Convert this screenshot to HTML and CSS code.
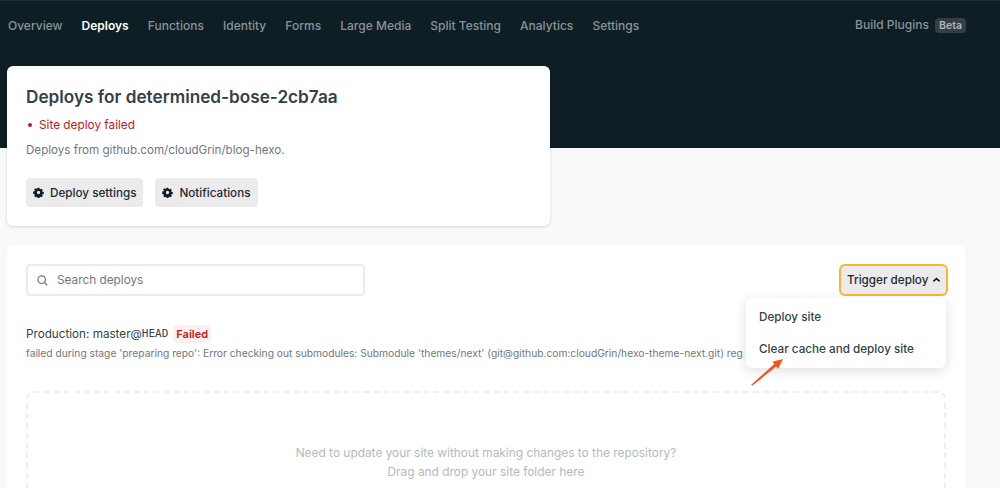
FILE: index.html
```html
<!DOCTYPE html>
<html lang="en">
<head>
  <meta charset="UTF-8">
  <title>Deploys | determined-bose-2cb7aa</title>
  <link rel="stylesheet" href="styles.css">
</head>
<body>
  <!-- Header Section -->
  <header class="site-header">
    <nav class="tabs">
      <a href="#">Overview</a>
      <a href="#" class="active">Deploys</a>
      <a href="#">Functions</a>
      <a href="#">Identity</a>
      <a href="#">Forms</a>
      <a href="#">Large Media</a>
      <a href="#">Split Testing</a>
      <a href="#">Analytics</a>
      <a href="#">Settings</a>
      <a href="#" class="plugins">Build Plugins <span class="beta">Beta</span></a>
    </nav>
  </header>

  <!-- Site Card -->
  <section class="site-card">
    <h1>Deploys for determined-bose-2cb7aa</h1>
    <p class="status"><span class="dot"></span>Site deploy failed</p>
    <p class="source">Deploys from github.com/cloudGrin/blog-hexo.</p>
    <div class="card-actions">
      <button class="btn">
        <svg class="gear" viewBox="0 0 16 16"><path fill-rule="evenodd" d="M6.700 1h2.600l.4 1.900 1.100.5 1.700-1 1.800 1.800-1 1.700.5 1.100 1.900.4v2.600l-1.900.4-.5 1.100 1 1.700-1.800 1.800-1.700-1-1.100.5-.4 1.900H6.700l-.4-1.900-1.100-.5-1.700 1-1.800-1.800 1-1.700-.5-1.100-1.900-.4V6.700l1.900-.4.5-1.100-1-1.700 1.800-1.800 1.700 1 1.100-.5zM8 5.600a2.400 2.400 0 1 0 0 4.800 2.400 2.400 0 0 0 0-4.800z"/></svg>
        Deploy settings
      </button>
      <button class="btn">
        <svg class="gear" viewBox="0 0 16 16"><path fill-rule="evenodd" d="M6.700 1h2.600l.4 1.900 1.100.5 1.700-1 1.800 1.800-1 1.700.5 1.100 1.900.4v2.600l-1.900.4-.5 1.100 1 1.700-1.800 1.800-1.700-1-1.100.5-.4 1.900H6.700l-.4-1.900-1.100-.5-1.700 1-1.800-1.800 1-1.700-.5-1.100-1.900-.4V6.700l1.900-.4.5-1.100-1-1.700 1.800-1.800 1.700 1 1.100-.5zM8 5.600a2.400 2.400 0 1 0 0 4.800 2.400 2.400 0 0 0 0-4.800z"/></svg>
        Notifications
      </button>
    </div>
  </section>

  <!-- Deploys Panel -->
  <section class="panel">
    <div class="toolbar">
      <label class="search">
        <svg class="search-icon" viewBox="0 0 16 16"><circle cx="7" cy="7" r="4.600"/><path d="M10.500 10.500l3.500 3.500"/></svg>
        <span>Search deploys</span>
      </label>
      <button class="btn trigger">Trigger deploy
        <svg class="caret" viewBox="0 0 10 6"><path d="M1.500 4.500L5 1.500l3.500 3"/></svg>
      </button>
      <div class="menu">
        <a href="#">Deploy site</a>
        <a href="#">Clear cache and deploy site</a>
      </div>
      <svg class="arrow" viewBox="0 0 34 28"><path d="M1 27L24.300 6.100 22.400 3.800 33 1 28 10.800 26.100 8.500 2.500 27.500z"/></svg>
    </div>

    <div class="deploy">
      <p class="deploy-title">Production: master@<code>HEAD</code> <span class="tag">Failed</span></p>
      <p class="deploy-error">failed during stage 'preparing repo': Error checking out submodules: Submodule 'themes/next' (git@github.com:cloudGrin/hexo-theme-next.git) reg</p>
    </div>

    <div class="dropzone">
      <p>Need to update your site without making changes to the repository?</p>
      <p>Drag and drop your site folder here</p>
    </div>
  </section>
</body>
</html>
```

FILE: styles.css
```css
/* Global Styles */
* {
  box-sizing: border-box;
  margin: 0;
  padding: 0;
}

html,
body {
  height: 488px;
  overflow: hidden;
}

body {
  font-family: Inter, "Liberation Sans", sans-serif;
  font-size: 12px;
  color: #0e1e25;
  background-color: #f8f9fb;
}

/* Header Styles */
.site-header {
  height: 148px;
  padding-top: 1px;
  background-color: #0e1e25;
  box-shadow: inset 0 2px 0 -1px #1e2d34;
}

.tabs {
  display: flex;
  align-items: center;
  gap: 19.100px;
  height: 48px;
  padding: 0 34px 0 8px;
}

.tabs a {
  color: #8b9397;
  font-size: 12px;
  font-weight: 500;
  text-decoration: none;
}

.tabs a.active {
  color: #fff;
  font-weight: 600;
}

.tabs .plugins {
  margin-left: auto;
}

.beta {
  display: inline-block;
  margin-left: 3px;
  padding: 1px 4px;
  border-radius: 4px;
  background-color: #343f45;
  color: #b0b5b8;
  font-size: 10.500px;
  font-weight: 600;
  line-height: 13px;
}

/* Site Card */
.site-card {
  position: relative;
  width: 543px;
  height: 160px;
  margin: -82px 0 0 7px;
  padding: 19px 19px 0;
  border-radius: 6px;
  background-color: #fff;
  box-shadow: 0 1px 3px rgba(14, 30, 37, 0.16);
}

.site-card h1 {
  color: #343f46;
  font-size: 17.200px;
  font-weight: 600;
  line-height: 24px;
}

.status {
  display: flex;
  align-items: center;
  margin-top: 8px;
  color: #b91c23;
  font-size: 11.800px;
  line-height: 16px;
}

.dot {
  width: 4px;
  height: 4px;
  margin: 0 7px 0 2px;
  border-radius: 50%;
  background-color: #b91c23;
}

.source {
  margin-top: 9px;
  color: #6f787d;
  font-size: 11.600px;
  line-height: 16px;
}

.card-actions {
  display: flex;
  gap: 12px;
  margin-top: 20px;
}

.btn {
  display: flex;
  align-items: center;
  height: 29px;
  padding: 0 7px;
  border: 0;
  border-radius: 4px;
  background-color: #ebebeb;
  color: #1d2a31;
  font-family: inherit;
  font-size: 11.700px;
  font-weight: 500;
  white-space: nowrap;
}

.gear {
  width: 11px;
  height: 11px;
  margin-right: 6px;
  fill: #0e1e25;
}

/* Deploys Panel */
.panel {
  height: 260px;
  margin: 19px 35px 0 7px;
  padding: 19px 19px 0;
  border-radius: 6px 6px 0 0;
  background-color: #fff;
}

.toolbar {
  position: relative;
  display: flex;
  justify-content: space-between;
  align-items: center;
}

.search {
  display: flex;
  align-items: center;
  width: 339px;
  height: 32px;
  padding: 0 8px;
  border: 2px solid #eaebec;
  border-radius: 4px;
  color: #6f787d;
  font-size: 11.800px;
}

.search-icon {
  width: 13px;
  height: 13px;
  margin-right: 8px;
  fill: none;
  stroke: #6f787d;
  stroke-width: 1.500;
}

.trigger {
  width: 109px;
  height: 32px;
  margin-right: -2px;
  padding: 0 6px;
  border: 2px solid #f4b834;
  border-radius: 6px;
}

.caret {
  flex: none;
  width: 9px;
  height: 6px;
  margin-left: 4px;
  fill: none;
  stroke: #0e1e25;
  stroke-width: 1.800;
}

.menu {
  position: absolute;
  top: 34px;
  right: 0;
  z-index: 2;
  display: flex;
  flex-direction: column;
  width: 200px;
  height: 70px;
  padding: 3px 13px;
  border-radius: 6px;
  background-color: #fff;
  box-shadow: 0 3px 12px rgba(14, 30, 37, 0.14);
}

.menu a {
  color: #343f46;
  font-size: 11.700px;
  font-weight: 500;
  line-height: 32px;
  text-decoration: none;
}

.arrow {
  position: absolute;
  top: 94px;
  right: 162px;
  z-index: 3;
  width: 34px;
  height: 28px;
  fill: #f4511e;
}

/* Latest Deploy */
.deploy {
  margin-top: 29px;
}

.deploy-title {
  display: flex;
  align-items: center;
  color: #343f46;
  font-size: 11.700px;
  line-height: 18px;
}

.deploy-title code {
  font-family: "DejaVu Sans Mono", monospace;
  font-size: 11px;
}

.tag {
  margin-left: 5px;
  padding: 0 3px;
  border-radius: 3px;
  background-color: #fdf0f0;
  color: #b91c23;
  font-size: 11px;
  font-weight: 600;
}

.deploy-error {
  overflow: hidden;
  margin-top: 2px;
  color: #6f787d;
  font-size: 10.250px;
  line-height: 16px;
  white-space: nowrap;
}

/* Drop Zone */
.dropzone {
  height: 120px;
  margin-top: 30px;
  padding-top: 50px;
  border: 2px dashed #eeeff0;
  border-bottom: 0;
  border-radius: 8px 8px 0 0;
  color: #b5babc;
  font-size: 11.900px;
  line-height: 19px;
  text-align: center;
}
```
